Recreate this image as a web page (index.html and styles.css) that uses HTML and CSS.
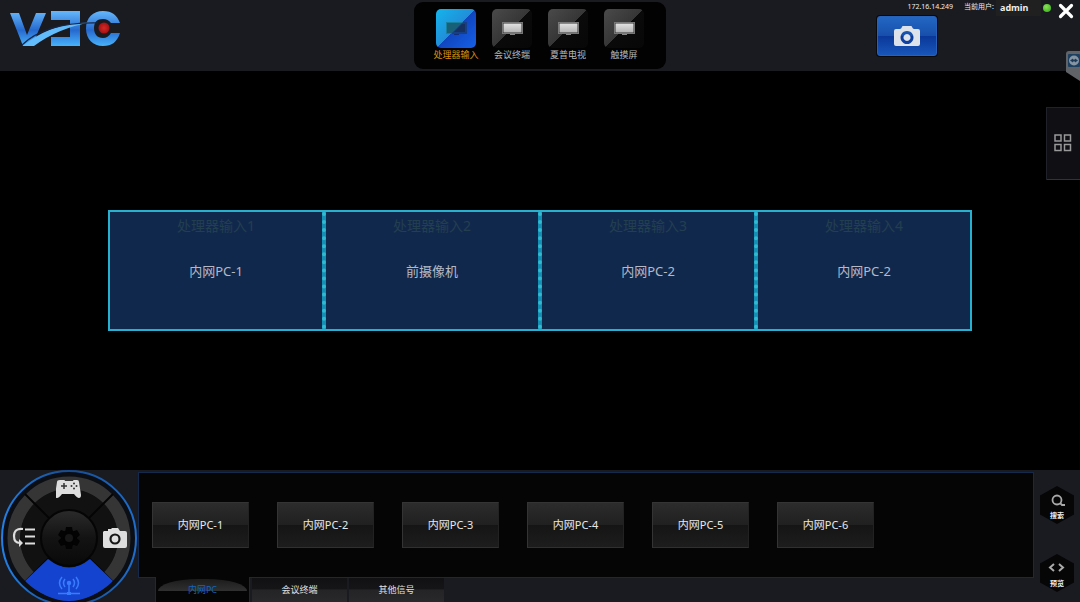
FILE: index.html
```html
<!DOCTYPE html>
<html lang="zh-CN">
<head>
<meta charset="utf-8">
<meta name="viewport" content="width=device-width, initial-scale=1">
<title>V3C</title>
<link rel="stylesheet" href="styles.css">
</head>
<body>
<svg class="defs" width="0" height="0" aria-hidden="true">
  <defs>
    <linearGradient id="screen" x1="0" y1="0" x2="0" y2="1"><stop offset="0" stop-color="#e2e2e2"/><stop offset="1" stop-color="#b4b4b4"/></linearGradient>
    <symbol id="monitor" viewBox="0 0 22 14">
      <path d="M1 0h21v12h-21z" fill="#777"/><path d="M2 1h19v10h-19z" fill="#333"/><path d="M2.500 1.500h18v9h-18z" fill="url(#screen)"/><path d="M9 12h5v1h-5z" fill="#888"/>
    </symbol>
    <symbol id="camera" viewBox="0 0 26 21">
      <path fill-rule="evenodd" d="M2 3h4q1 0 2-2 0-1 1-1h8q1 0 1 1 1 2 2 2h4q2 0 2 2v13q0 2-2 2h-22q-2 0-2-2v-13q0-2 2-2zM13 5a6.500 6.500 0 1 0 .01 0zM13 8a3.500 3.500 0 1 1-.01 0z"/>
    </symbol>
  </defs>
</svg>
<header class="top">
  <svg class="logo" width="112" height="36" viewBox="0 0 112 36" role="img" aria-label="V3C">
    <defs>
      <linearGradient id="lg" gradientUnits="userSpaceOnUse" x1="0" y1="0" x2="0" y2="35"><stop offset="0" stop-color="#65b8fb"/><stop offset=".55" stop-color="#2669cf"/><stop offset="1" stop-color="#48b2fb"/></linearGradient>
      <radialGradient id="red"><stop offset="0" stop-color="#d42a24"/><stop offset="1" stop-color="#a51015"/></radialGradient>
    </defs>
    <path d="M0 2h9l8 22 9-22h10l-14 33h-9z" fill="url(#lg)"/>
    <path d="M41 0h29v35h-29v-9h19v-17h-19z" fill="url(#lg)"/>
    <path d="M110 12c-3-8-8-12-17-12-10 0-17 7-17 17.500s7 17.500 17 17.500c9 0 14-4 17-13h-9q-3 5-8 5c-6 0-9-4-9-10s3-9 9-9q5 0 8 4z" fill="url(#lg)"/>
    <path d="M13 35q23-20 57-23l12-1q-34 6-58 24z" fill="#62bcfc"/>
    <path d="M12 34q24-23 76-22" fill="none" stroke="#152444" stroke-width="1.200"/>
    <circle cx="94" cy="17" r="5.500" fill="url(#red)"/>
  </svg>
  <nav class="sources">
    <button class="source active"><span class="tile"><svg width="22" height="14" viewBox="0 0 22 14"><path d="M1 0h21v12h-21z" fill="#1c809f"/><path d="M2 1h19v10h-19z" fill="#185f78"/><path d="M18 0h4v12h-16z" fill="#163f86"/><path d="M17 2h3v8h-11z" fill="#153061"/><path d="M9 12h5v1h-5z" fill="#12307a"/></svg></span>处理器输入</button>
    <button class="source"><span class="tile"><svg width="22" height="14"><use href="#monitor"/></svg></span>会议终端</button>
    <button class="source"><span class="tile"><svg width="22" height="14"><use href="#monitor"/></svg></span>夏普电视</button>
    <button class="source"><span class="tile"><svg width="22" height="14"><use href="#monitor"/></svg></span>触摸屏</button>
  </nav>
  <div class="account">
    <div class="status">
      <span class="ip">172.16.14.249</span>
      <span class="who">当前用户:</span>
      <span class="user">admin</span>
      <span class="online"></span>
      <button class="close" aria-label="关闭"><svg width="16" height="16" viewBox="0 0 16 16"><path d="M2.500 2.500l11 11M13.500 2.500l-11 11" stroke="#fff" stroke-width="3.200" stroke-linecap="round"/></svg></button>
    </div>
    <button class="snapshot" aria-label="截图"><svg width="26" height="21" fill="#dde1e9"><use href="#camera"/></svg></button>
  </div>
  <button class="remote" aria-label="远程"><svg width="14" height="30" viewBox="0 0 14 30"><path d="M3 0h11v30l-14-9v-18q0-3 3-3z" fill="#606469"/><rect x="2" y="3" width="12" height="13" rx="1" fill="#1d3f60"/><circle cx="8" cy="9.500" r="5" fill="#8595a3"/><path d="M4 9.500l3-2v1h2v-1l3 2-3 2v-1h-2v1z" fill="#1d3b56"/></svg></button>
</header>
<main class="stage">
  <section class="wall">
    <div class="cell"><span class="slot">处理器输入1</span><span class="signal">内网PC-1</span></div>
    <div class="cell"><span class="slot">处理器输入2</span><span class="signal">前摄像机</span></div>
    <div class="cell"><span class="slot">处理器输入3</span><span class="signal">内网PC-2</span></div>
    <div class="cell"><span class="slot">处理器输入4</span><span class="signal">内网PC-2</span></div>
  </section>
  <button class="drawer" aria-label="布局"><svg width="18" height="18" viewBox="0 0 18 18" fill="none" stroke="#999" stroke-width="1.500"><path d="M1 1h6v6h-6zM10.500 1h6v6h-6zM1 10.500h6v6h-6zM10.500 10.500h6v6h-6z"/></svg></button>
</main>
<footer class="bottom">
  <div class="dial">
    <svg width="138" height="132" viewBox="0 0 138 132">
      <defs>
        <linearGradient id="hub" x1="0" y1="0" x2="0" y2="1"><stop offset="0" stop-color="#2b2b2b"/><stop offset=".5" stop-color="#131313"/><stop offset="1" stop-color="#090909"/></linearGradient>
        <linearGradient id="rim" x1="0" y1="0" x2="1" y2="0"><stop offset="0" stop-color="#2380e4"/><stop offset=".5" stop-color="#164b90"/><stop offset="1" stop-color="#1f6dcc"/></linearGradient>
      </defs>
      <circle cx="69" cy="68" r="67" fill="#0b0e14" stroke="url(#rim)" stroke-width="2"/>
      <circle cx="69" cy="68" r="55" fill="none" stroke="#353535" stroke-width="13"/>
      <circle cx="69" cy="68" r="49" fill="#111"/>
      <path d="M25 24l88 88M113 24l-88 88" stroke="#050505" stroke-width="2"/>
      <path d="M48 89q21 17 42 0l23 22q-44 40-88 0z" fill="#1444cf"/>
      <circle cx="69" cy="68" r="28" fill="url(#hub)" stroke="#050505" stroke-width="2"/>
    </svg>
    <button class="dial-key pad" aria-label="控制"><svg width="26" height="20" viewBox="0 0 26 20"><path fill="#dedede" d="M5 1h3q1 0 1 1h8q0-1 1-1h3q2 0 2 2l2 13q0 3-2 3-2 0-5-4h-12q-3 4-5 4-2 0-2-3l2-13q0-2 3-2z"/><path d="M8 4v6M5 7h6" stroke="#333" stroke-width="1.500"/><g fill="#333"><circle cx="18" cy="4.500" r="1"/><circle cx="18" cy="9.500" r="1"/><circle cx="15.500" cy="7" r="1"/><circle cx="20.500" cy="7" r="1"/></g></svg></button>
    <button class="dial-key list" aria-label="列表"><svg width="24" height="20" viewBox="0 0 24 20"><path d="M11 2q-9-1-9 7 0 7 6 7M13 2.500h10M13 9.500h10M13 16.500h10" fill="none" stroke="#dedede" stroke-width="2.200"/><path d="M7 12l4 4-4 4z" fill="#dedede"/></svg></button>
    <button class="dial-key shot" aria-label="截图"><svg width="24" height="21" viewBox="0 0 24 21"><path fill="#dedede" d="M1 3h4V1h3l1-1h6l2 3h5q2 0 2 2v13q0 2-2 2h-20q-2 0-2-2v-14z"/><circle cx="12" cy="11" r="4.500" fill="#dedede" stroke="#161616" stroke-width="2.200"/></svg></button>
    <button class="dial-key cast" aria-label="信号"><svg width="24" height="20" viewBox="0 0 24 20" fill="none" stroke="#397bff" stroke-width="1.500"><circle cx="12" cy="7" r="1.500" fill="#397bff"/><path d="M8 3q-3 4 0 8M16 3q3 4 0 8M5 1q-5 6 0 12M19 1q5 6 0 12M12 8v9M1 17.500h22"/><path d="M10 17.500h4" stroke-width="3"/></svg></button>
    <button class="dial-key gear" aria-label="设置"><svg width="24" height="24" viewBox="-12 -12 24 24"><g fill="#030303"><circle r="8"/><path id="tooth" d="M-3-11h6l1 6h-8z"/><use href="#tooth" transform="rotate(60)"/><use href="#tooth" transform="rotate(120)"/><use href="#tooth" transform="rotate(180)"/><use href="#tooth" transform="rotate(240)"/><use href="#tooth" transform="rotate(300)"/></g><circle r="4" fill="#171717"/></svg></button>
  </div>
  <div class="deck">
    <div class="signals">
      <button class="input">内网PC-1</button>
      <button class="input">内网PC-2</button>
      <button class="input">内网PC-3</button>
      <button class="input">内网PC-4</button>
      <button class="input">内网PC-5</button>
      <button class="input">内网PC-6</button>
    </div>
    <nav class="tabs">
      <button class="tab current"><span class="arch"></span><span class="name">内网PC</span></button>
      <button class="tab">会议终端</button>
      <button class="tab">其他信号</button>
    </nav>
  </div>
  <div class="tools">
    <button class="hex"><svg width="18" height="15" viewBox="0 0 18 15" fill="none" stroke="#a9a9a9" stroke-width="1.800"><circle cx="9" cy="6" r="4.500"/><path d="M12 9l2 2h3"/></svg>搜索</button>
    <button class="hex"><svg width="18" height="15" viewBox="0 0 18 15" fill="none" stroke="#a9a9a9" stroke-width="2"><path d="M6 2l-4 3.500 4 3.500M11 2l4 3.500-4 3.500"/></svg>预览</button>
  </div>
</footer>
</body>
</html>
```

FILE: styles.css
```css
* { box-sizing: border-box; }
body {
  margin: 0;
  min-height: 100vh;
  display: flex;
  flex-direction: column;
  background: #000;
  color: #ddd;
  font-family: "Noto Sans", "Noto Sans CJK SC", sans-serif;
}
button {
  margin: 0;
  padding: 0;
  border: 0;
  background: none;
  color: inherit;
  font: inherit;
  cursor: pointer;
}
svg { display: block; }
.defs { position: absolute; }

.top {
  position: relative;
  display: grid;
  grid-template-columns: 1fr auto 1fr;
  align-items: start;
  height: 71px;
  background: #1a1b21;
}
.logo { margin: 11px 0 0 10px; }
.sources {
  display: flex;
  gap: 8px;
  margin-top: 2px;
  padding: 7px 18px 0;
  height: 67px;
  border-radius: 9px;
  background: #020202;
}
.source {
  display: flex;
  flex-direction: column;
  align-items: center;
  gap: 1px;
  width: 48px;
  font-size: 9px;
  line-height: 12px;
  white-space: nowrap;
  color: #b9b9b9;
}
.tile {
  display: grid;
  place-items: center;
  width: 40px;
  height: 39px;
  border-radius: 5px;
  background: linear-gradient(135deg, #4a4a4a, #363636 50%, #0a0a0a 50%, #070707);
}
.active { color: #dc8d12; }
.active .tile { background: linear-gradient(135deg, #14b5ee, #218ed8 50%, #1046bf 50%, #1660e8); }

.account {
  display: flex;
  flex-direction: column;
}
.status {
  display: flex;
  justify-content: flex-end;
  height: 16px;
  padding-right: 6px;
  font-size: 7px;
  line-height: 14px;
  color: #eee;
  white-space: nowrap;
}
.who { margin: 0 2px 0 11px; }
.user {
  width: 45px;
  padding-left: 4px;
  background: #202020;
  font-size: 9px;
  font-weight: 700;
  line-height: 15px;
}
.online {
  width: 8px;
  height: 8px;
  margin: 4px 7px 0 2px;
  border-radius: 50%;
  background: radial-gradient(circle at 40% 35%, #8be256, #2ba916);
}
.close {
  height: 16px;
  margin-top: 3px;
}
.snapshot {
  display: grid;
  place-items: center;
  align-self: flex-end;
  width: 60px;
  height: 40px;
  margin-right: 143px;
  border: 1px solid #2762ba;
  border-radius: 3px;
  background: linear-gradient(#2267c3, #174fab 50%, #0a3799 50%, #1856b9);
  box-shadow: 0 0 0 1px #080a10;
}
.remote {
  position: absolute;
  top: 51px;
  right: 0;
  z-index: 1;
}

.stage {
  position: relative;
  flex: 1;
  display: flex;
  flex-direction: column;
  justify-content: center;
  padding: 0 10%;
}
.wall {
  display: grid;
  grid-template-columns: repeat(4, 1fr);
}
.cell {
  position: relative;
  display: flex;
  flex-direction: column;
  align-items: center;
  gap: 25px;
  height: 121px;
  padding-top: 4px;
  border: 2px solid #27b1cf;
  background: #11284d;
  line-height: 20px;
}
.cell + .cell::before {
  content: "";
  position: absolute;
  top: 0;
  bottom: 0;
  left: -4px;
  border-left: 4px dotted #30b9cf;
  background: #1590b4;
}
.slot {
  font-size: 14px;
  color: #233f4f;
}
.signal {
  font-size: 13px;
  color: #b3bac5;
}
.drawer {
  position: absolute;
  top: 36px;
  right: 0;
  display: grid;
  place-items: center;
  width: 34px;
  height: 73px;
  padding: 0 2px 2px 0;
  border: solid #20222b;
  border-width: 1px 0 0 1px;
  box-shadow: inset 0 -1px #15366e;
  background: #0f0f14;
}

.bottom {
  display: grid;
  grid-template-columns: 138px 1fr 46px;
  height: 132px;
  background: #1a1b21;
}
.dial { position: relative; }
.dial-key { position: absolute; }
.pad { left: 56px; top: 9px; }
.list { left: 12px; top: 57px; }
.shot { left: 103px; top: 58px; }
.cast { left: 57px; top: 106px; }
.gear { left: 57px; top: 56px; }

.deck {
  display: flex;
  flex-direction: column;
  min-width: 0;
  padding-top: 2px;
}
.signals {
  display: flex;
  align-items: flex-start;
  gap: 28px;
  height: 106px;
  padding: 29px 13px 0;
  border: 1px solid #142a4c;
  background: #050506;
}
.input {
  width: 97px;
  height: 46px;
  border: 1px solid #343434;
  border-right-color: #222;
  border-bottom-color: #303030;
  background: linear-gradient(#2c2c2d, #202021 50%, #151516 50%, #1d1d1e);
  color: #e8e8e8;
  font-size: 11px;
  line-height: 16px;
}
.tabs {
  display: flex;
  gap: 2px;
  margin: -1px 0 0 17px;
  flex: 1;
}
.tab {
  width: 95px;
  border-top: 1px solid #142a4c;
  background: linear-gradient(#111113, #151517 45%, #242427 50%, #29292c);
  color: #e0e0e0;
  font-size: 9px;
  line-height: 22px;
}
.current {
  display: grid;
  border: solid #142a4c;
  border-width: 0 1px;
  background: #050506;
  color: #1464bd;
}
.arch, .name { grid-area: 1 / 1; }
.arch {
  height: 12px;
  margin: 2px 2px 0;
  border-radius: 40px 40px 0 0 / 12px 12px 0 0;
  background: linear-gradient(#1c1c1c, #303030);
}
.name { z-index: 1; line-height: 25px; }

.tools {
  display: flex;
  flex-direction: column;
  align-items: center;
  gap: 30px;
  padding-top: 16px;
}
.hex {
  display: flex;
  flex-direction: column;
  align-items: center;
  gap: 1px;
  width: 34px;
  height: 38px;
  padding-top: 8px;
  background: #060607;
  clip-path: polygon(50% 0, 100% 25%, 100% 75%, 50% 100%, 0 75%, 0 25%);
  color: #eee;
  font-size: 7px;
  font-weight: 700;
  line-height: 12px;
}
```
